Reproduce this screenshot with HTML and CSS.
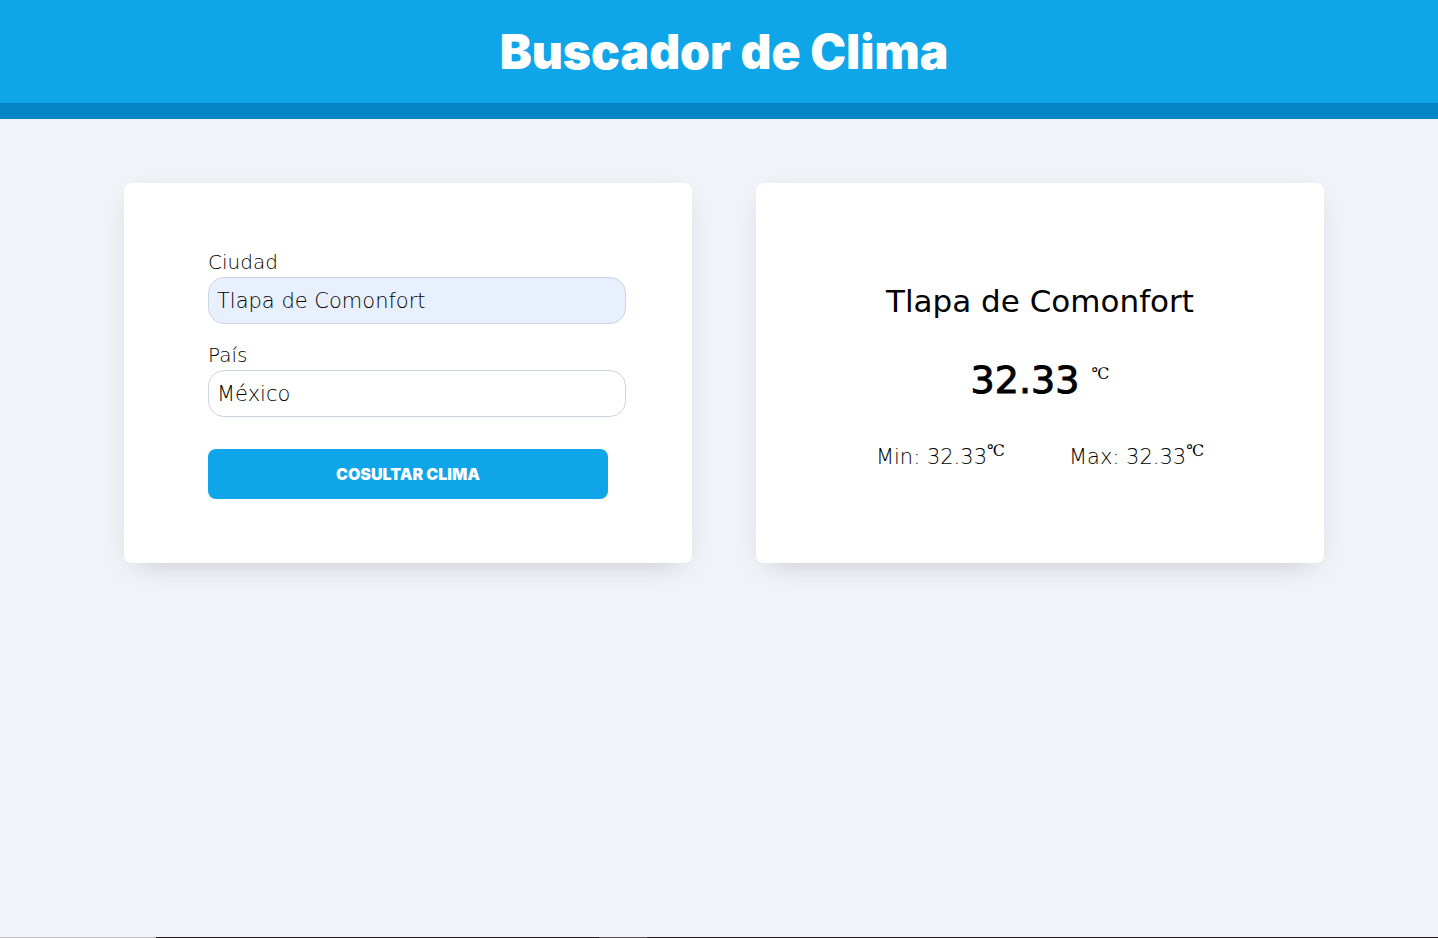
FILE: index.html
```html
<!DOCTYPE html>
<html lang="es">
<head>
<meta charset="utf-8">
<meta name="viewport" content="width=device-width, initial-scale=1">
<title>Buscador de Clima</title>
<link rel="stylesheet" href="styles.css">
</head>
<body>
<header class="header"><h1 class="title">Buscador de Clima</h1></header>
<main class="main">
  <section class="card">
    <form class="form">
      <div class="field">
        <label class="label" for="ciudad">Ciudad</label>
        <input class="input input-filled" id="ciudad" type="text" value="Tlapa de Comonfort">
      </div>
      <div class="field">
        <label class="label" for="pais">País</label>
        <input class="input" id="pais" type="text" value="México">
      </div>
      <button class="submit" type="submit">COSULTAR CLIMA</button>
    </form>
  </section>
  <section class="card result">
    <h2 class="city">Tlapa de Comonfort</h2>
    <p class="current">32.33 <span class="unit">℃</span></p>
    <div class="range">
      <p class="limit">Min: 32.33<span class="unit">℃</span></p>
      <p class="limit">Max: 32.33<span class="unit">℃</span></p>
    </div>
  </section>
</main>
<footer class="strip"><span class="strip-start"></span><span class="strip-mark"></span></footer>
</body>
</html>
```
FILE: styles.css
```css
* { box-sizing: border-box; }
body {
  display: flex;
  flex-direction: column;
  min-height: 100vh;
  margin: 0;
  background: #f0f4f9;
  color: #000;
  font-family: "DejaVu Sans", sans-serif;
  font-size: 20px;
  font-weight: 200;
}
h1, h2, p { margin: 0; }
.header {
  padding: 21px 0 20px 10px;
  background: #0ea5e9;
  border-bottom: 16px solid #0284c7;
  text-align: center;
}
.title {
  color: #fff;
  font-family: Inter, sans-serif;
  font-size: 48px;
  font-weight: 900;
  line-height: 62px;
}
.main {
  display: grid;
  grid-template-columns: repeat(2, minmax(0, 568px));
  gap: 64px;
  justify-content: center;
  padding: 64px 0 64px 10px;
}
.card {
  padding: 64px 24px;
  background: #fff;
  border-radius: 8px;
  box-shadow: 0 8px 32px -8px rgb(30 20 30 / 12%), 0 16px 24px -20px rgb(30 20 30 / 12%);
}
.form {
  width: 100%;
  max-width: 400px;
  margin: 0 auto;
}
.field { margin-bottom: 16px; }
.label {
  display: block;
  line-height: 30px;
}
.input {
  box-sizing: content-box;
  display: block;
  width: 100%;
  height: 29px;
  padding: 8px;
  border: 1px solid #cbd5e1;
  border-radius: 16px;
  background: #fff;
  color: #000;
  font: inherit;
  font-size: 21px;
}
.input-filled { background: #e8f0fe; }
.submit {
  width: 100%;
  height: 50px;
  margin-top: 16px;
  padding: 0;
  border: 0;
  border-radius: 8px;
  background: #0ea5e9;
  color: #fff;
  font: 900 16px/24px Inter, sans-serif;
}
.result {
  display: flex;
  flex-direction: column;
  align-items: center;
  justify-content: center;
  padding-top: 74px;
  gap: 34px;
}
.city {
  font-size: 31px;
  font-weight: 400;
  line-height: 36px;
}
.current {
  font-size: 38px;
  font-weight: 400;
  line-height: 54px;
  -webkit-text-stroke: 1px currentColor;
}
.range {
  display: flex;
  gap: 64px;
}
.limit {
  font-size: 21px;
  line-height: 32px;
}
.unit {
  font-family: "DejaVu Serif", serif;
  font-size: 16px;
  font-weight: 400;
  line-height: 0;
  vertical-align: super;
  -webkit-text-stroke: 0;
}
.strip {
  display: flex;
  height: 1px;
  margin-top: auto;
  background: #211d20;
}
.strip-start {
  width: 156px;
  margin-right: 443px;
  background: #c3bdc0;
}
.strip-mark {
  width: 48px;
  background: #555053;
}
```
